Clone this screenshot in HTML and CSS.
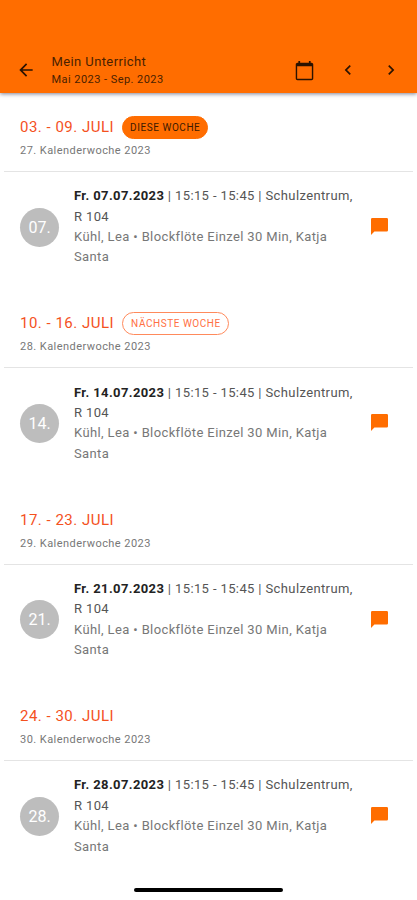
FILE: index.html
```html
<!DOCTYPE html>
<html lang="de">
<head>
    <meta charset="utf-8">
    <meta name="viewport" content="width=device-width, initial-scale=1">
    <title>Mein Unterricht</title>
    <link rel="stylesheet" href="styles.css">
</head>
<body>
    <header class="toolbar">
        <svg class="back" viewBox="0 0 24 24"><path d="M20 11H7.83l5.59-5.59L12 4l-8 8 8 8 1.41-1.41L7.83 13H20v-2z"/></svg>
        <div class="toolbar-text">
            <h1>Mein Unterricht</h1>
            <p>Mai 2023 - Sep. 2023</p>
        </div>
        <svg class="calendar" viewBox="0 0 24 24"><path d="M20 3h-1V1h-2v2H7V1H5v2H4c-1.100 0-2 .9-2 2v16c0 1.100.9 2 2 2h16c1.100 0 2-.9 2-2V5c0-1.100-.9-2-2-2zm.4 18.400H3.600V7h16.800v14.400z"/></svg>
        <svg class="chevron" viewBox="0 0 24 24"><path d="M15.410 7.410 14 6l-6 6 6 6 1.410-1.410L10.830 12z"/></svg>
        <svg class="chevron" viewBox="0 0 24 24"><path d="M10 6 8.590 7.410 13.170 12l-4.580 4.590L10 18l6-6z"/></svg>
    </header>

    <main>
        <section class="week">
            <div class="week-head">
                <div class="week-title"><h2>03. - 09. JULI</h2><span class="chip chip-filled">DIESE WOCHE</span></div>
                <p>27. Kalenderwoche 2023</p>
            </div>
            <div class="lesson">
                <div class="day">07.</div>
                <div class="lesson-text">
                    <p class="time"><b>Fr. 07.07.2023</b> | 15:15 - 15:45 | Schulzentrum,<br>R 104</p>
                    <p>Kühl, Lea • Blockflöte Einzel 30 Min, Katja<br>Santa</p>
                </div>
                <svg class="message" viewBox="0 0 20 20"><path d="M1.500 0H18.500Q20 0 20 1.500V14.500Q20 16 18.500 16H4L0 20V1.500Q0 0 1.500 0Z"/></svg>
            </div>
        </section>

        <section class="week">
            <div class="week-head">
                <div class="week-title"><h2>10. - 16. JULI</h2><span class="chip">NÄCHSTE WOCHE</span></div>
                <p>28. Kalenderwoche 2023</p>
            </div>
            <div class="lesson">
                <div class="day">14.</div>
                <div class="lesson-text">
                    <p class="time"><b>Fr. 14.07.2023</b> | 15:15 - 15:45 | Schulzentrum,<br>R 104</p>
                    <p>Kühl, Lea • Blockflöte Einzel 30 Min, Katja<br>Santa</p>
                </div>
                <svg class="message" viewBox="0 0 20 20"><path d="M1.500 0H18.500Q20 0 20 1.500V14.500Q20 16 18.500 16H4L0 20V1.500Q0 0 1.500 0Z"/></svg>
            </div>
        </section>

        <section class="week">
            <div class="week-head">
                <div class="week-title"><h2>17. - 23. JULI</h2></div>
                <p>29. Kalenderwoche 2023</p>
            </div>
            <div class="lesson">
                <div class="day">21.</div>
                <div class="lesson-text">
                    <p class="time"><b>Fr. 21.07.2023</b> | 15:15 - 15:45 | Schulzentrum,<br>R 104</p>
                    <p>Kühl, Lea • Blockflöte Einzel 30 Min, Katja<br>Santa</p>
                </div>
                <svg class="message" viewBox="0 0 20 20"><path d="M1.500 0H18.500Q20 0 20 1.500V14.500Q20 16 18.500 16H4L0 20V1.500Q0 0 1.500 0Z"/></svg>
            </div>
        </section>

        <section class="week">
            <div class="week-head">
                <div class="week-title"><h2>24. - 30. JULI</h2></div>
                <p>30. Kalenderwoche 2023</p>
            </div>
            <div class="lesson">
                <div class="day">28.</div>
                <div class="lesson-text">
                    <p class="time"><b>Fr. 28.07.2023</b> | 15:15 - 15:45 | Schulzentrum,<br>R 104</p>
                    <p>Kühl, Lea • Blockflöte Einzel 30 Min, Katja<br>Santa</p>
                </div>
                <svg class="message" viewBox="0 0 20 20"><path d="M1.500 0H18.500Q20 0 20 1.500V14.500Q20 16 18.500 16H4L0 20V1.500Q0 0 1.500 0Z"/></svg>
            </div>
        </section>
    </main>

    <div class="home-bar"></div>
</body>
</html>
```
FILE: styles.css
```css
* {
    margin: 0;
    padding: 0;
    box-sizing: border-box;
}

body {
    height: 900px;
    overflow: hidden;
    display: flex;
    flex-direction: column;
    background-color: #fff;
    font-family: Roboto, sans-serif;
    font-size: 12px;
    color: #777;
}

svg {
    display: block;
    flex-shrink: 0;
}

.toolbar {
    height: 93px;
    flex-shrink: 0;
    display: flex;
    align-items: center;
    padding: 47px 16px 0 16px;
    background-color: #ff6d00;
    box-shadow: 0 1px 4px rgba(0, 0, 40, 0.5);
    color: #4a2100;
}

.toolbar svg {
    fill: #2b1300;
}

.back {
    width: 20px;
    height: 20px;
}

.toolbar-text {
    flex: 1;
    margin-left: 15.5px;
    padding-top: 1px;
}

h1 {
    font-size: 13px;
    font-weight: 400;
    line-height: 19px;
    letter-spacing: 0.4px;
}

.toolbar-text p {
    font-size: 11px;
    line-height: 18px;
    letter-spacing: 0.45px;
}

.calendar {
    width: 21px;
    height: 21px;
    margin-right: 23px;
}

.chevron {
    width: 20px;
    height: 20px;
}

.chevron + .chevron {
    margin-left: 23px;
}

.week {
    height: 196.4px;
}

.week-head {
    height: 79px;
    margin: 0 4px;
    padding: 22px 16px 0;
    border-bottom: 1px solid #e4e4e4;
}

.week-title {
    display: flex;
    align-items: center;
    height: 24px;
    gap: 8px;
}

h2 {
    font-size: 15px;
    font-weight: 400;
    letter-spacing: 0.5px;
    color: #f4511e;
}

.chip {
    height: 23px;
    padding: 0 7px 0 8px;
    border: 1px solid #ff8a5c;
    border-radius: 12px;
    font-size: 10px;
    line-height: 21px;
    letter-spacing: 0.55px;
    color: #ff7043;
}

.chip-filled {
    padding-left: 7px;
    border-color: #ff6d00;
    background-color: #ff6d00;
    color: #3d1a00;
}

.week-head p {
    font-size: 11px;
    line-height: 16px;
    margin-top: 4px;
    letter-spacing: 0.45px;
}

.lesson {
    display: flex;
    align-items: center;
    height: 110px;
    padding: 0 29px 0 20px;
}

.day {
    width: 39px;
    height: 39px;
    border-radius: 50%;
    background-color: #bdbdbd;
    color: #fff;
    font-size: 16px;
    line-height: 39px;
    text-align: center;
}

.lesson-text {
    flex: 1;
    margin-left: 15px;
    font-size: 13px;
    line-height: 20.4px;
    letter-spacing: 0.38px;
    white-space: nowrap;
}

.time {
    color: #555;
}

.time b {
    font-weight: 700;
    color: #222;
}

.message {
    width: 17px;
    height: 17px;
    margin-bottom: 1px;
    fill: #ff6d00;
}

.home-bar {
    position: absolute;
    left: 134px;
    bottom: 8px;
    width: 149px;
    height: 4px;
    border-radius: 2px;
    background-color: #000;
}
```
